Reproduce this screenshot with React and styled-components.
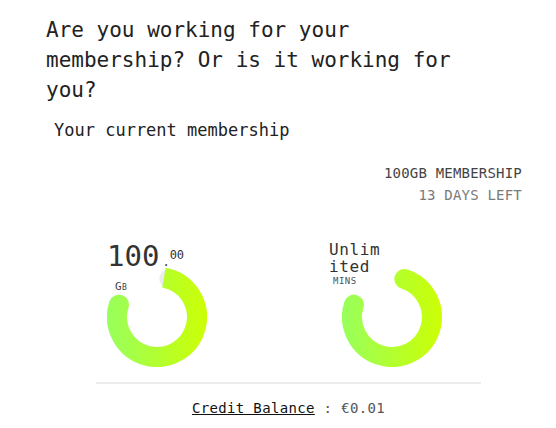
import React from 'react';
import styled, { createGlobalStyle } from 'styled-components';

const GlobalStyle = createGlobalStyle`
  body {
    margin: 0;
    background: #fff;
    font-family: "DejaVu Sans Mono", "Liberation Mono", monospace;
  }
`;

const Page = styled.div`
  width: 556px;
  box-sizing: border-box;
  padding: 15px 25px 0 46px;
`;

const Heading = styled.h1`
  margin: 0;
  max-width: 430px;
  font-size: 21px;
  line-height: 30px;
  font-weight: normal;
  color: #222;
`;

const SubHeading = styled.h2`
  margin: 15px 0 0 8px;
  font-size: 17px;
  line-height: 20px;
  font-weight: normal;
  color: #222;
`;

const MembershipInfo = styled.div`
  margin-top: 22px;
  padding-right: 9px;
  text-align: right;
  font-size: 14px;
  line-height: 22px;
  letter-spacing: 0.2px;
`;

const InfoLine = styled.div`
  color: ${(p) => (p.$muted ? '#7a7a7a' : '#444')};
`;

const GaugeRow = styled.div`
  display: flex;
  gap: 135px;
  margin-top: 35px;
  padding-left: 61px;
`;

const Gauge = styled.div`
  position: relative;
  width: 100px;
  padding-top: 26px;

  svg {
    display: block;
  }
`;

const Label = styled.div`
  position: absolute;
  top: 0;
  left: ${(p) => p.$left || 0}px;
  display: flex;
  flex-direction: column;
`;

const ValueRow = styled.div`
  display: flex;
  align-items: baseline;
  color: #333;
  font-size: 29px;
  line-height: 28px;
`;

const Decimal = styled.span`
  margin-left: 3px;
  font-size: 12px;
  color: #333;

  sup {
    vertical-align: 7px;
    font-size: 12px;
  }
`;

const Unit = styled.div`
  margin-top: ${(p) => p.$gap || 0}px;
  padding-left: ${(p) => p.$indent || 0}px;
  font-size: ${(p) => p.$size || 9}px;
  line-height: 12px;
  color: ${(p) => p.$color || '#444'};
  font-variant: ${(p) => (p.$smallCaps ? 'small-caps' : 'normal')};
  letter-spacing: 0.5px;
`;

const WordValue = styled.div`
  width: 56px;
  font-size: 16px;
  line-height: 17px;
  letter-spacing: 0.6px;
  color: #333;
  word-break: break-all;
`;

const Divider = styled.div`
  height: 2px;
  margin: 15px 50px 0;
  background: #ececec;
`;

const Balance = styled.div`
  margin-top: 14px;
  text-align: center;
  font-size: 14px;
  line-height: 20px;
  letter-spacing: 0.35px;
  color: #555;

  u {
    color: #111;
  }
`;

const point = (a) => {
  const r = (a * Math.PI) / 180;
  return [50 + 40 * Math.cos(r), 50 + 40 * Math.sin(r)];
};

const arc = (a0, a1) => {
  const [x0, y0] = point(a0);
  const [x1, y1] = point(a1);
  const large = a1 - a0 > 180 ? 1 : 0;
  return `M ${x0} ${y0} A 40 40 0 ${large} 1 ${x1} ${y1}`;
};

const Ring = ({ id, from, track }) => {
  const [ex, ey] = point(198);
  return (
    <svg width="100" height="100" viewBox="0 0 100 100">
      <defs>
        <linearGradient id={id} x1="0" y1="0" x2="100" y2="0" gradientUnits="userSpaceOnUse">
          <stop offset="0" stopColor="#98ff5c" />
          <stop offset="1" stopColor="#ccff05" />
        </linearGradient>
      </defs>
      {track && (
        <path d={arc(-72, 198)} fill="none" stroke="#ececec" strokeWidth="20" strokeLinecap="round" />
      )}
      <path d={arc(from, 198)} fill="none" stroke={`url(#${id})`} strokeWidth="20" strokeLinecap={track ? 'butt' : 'round'} />
      {track && <circle cx={ex} cy={ey} r="10" fill={`url(#${id})`} />}
    </svg>
  );
};

const App = () => {
  return (
    <Page>
      <GlobalStyle />
      <Heading>Are you working for your membership? Or is it working for you?</Heading>
      <SubHeading>Your current membership</SubHeading>
      <MembershipInfo>
        <InfoLine>100GB MEMBERSHIP</InfoLine>
        <InfoLine $muted>13 DAYS LEFT</InfoLine>
      </MembershipInfo>
      <GaugeRow>
        <Gauge>
          <Label>
            <ValueRow>
              100
              <Decimal>
                .<sup>00</sup>
              </Decimal>
            </ValueRow>
            <Unit $gap={5} $indent={8} $size={11} $smallCaps>Gb</Unit>
          </Label>
          <Ring id="data-grad" from={-80} track />
        </Gauge>
        <Gauge>
          <Label $left={-13}>
            <WordValue>Unlimited</WordValue>
            <Unit $indent={4} $color="#4a5066">MINS</Unit>
          </Label>
          <Ring id="mins-grad" from={-72} />
        </Gauge>
      </GaugeRow>
      <Divider />
      <Balance>
        <u>Credit Balance</u> : €0.01
      </Balance>
    </Page>
  );
};

export default App;
